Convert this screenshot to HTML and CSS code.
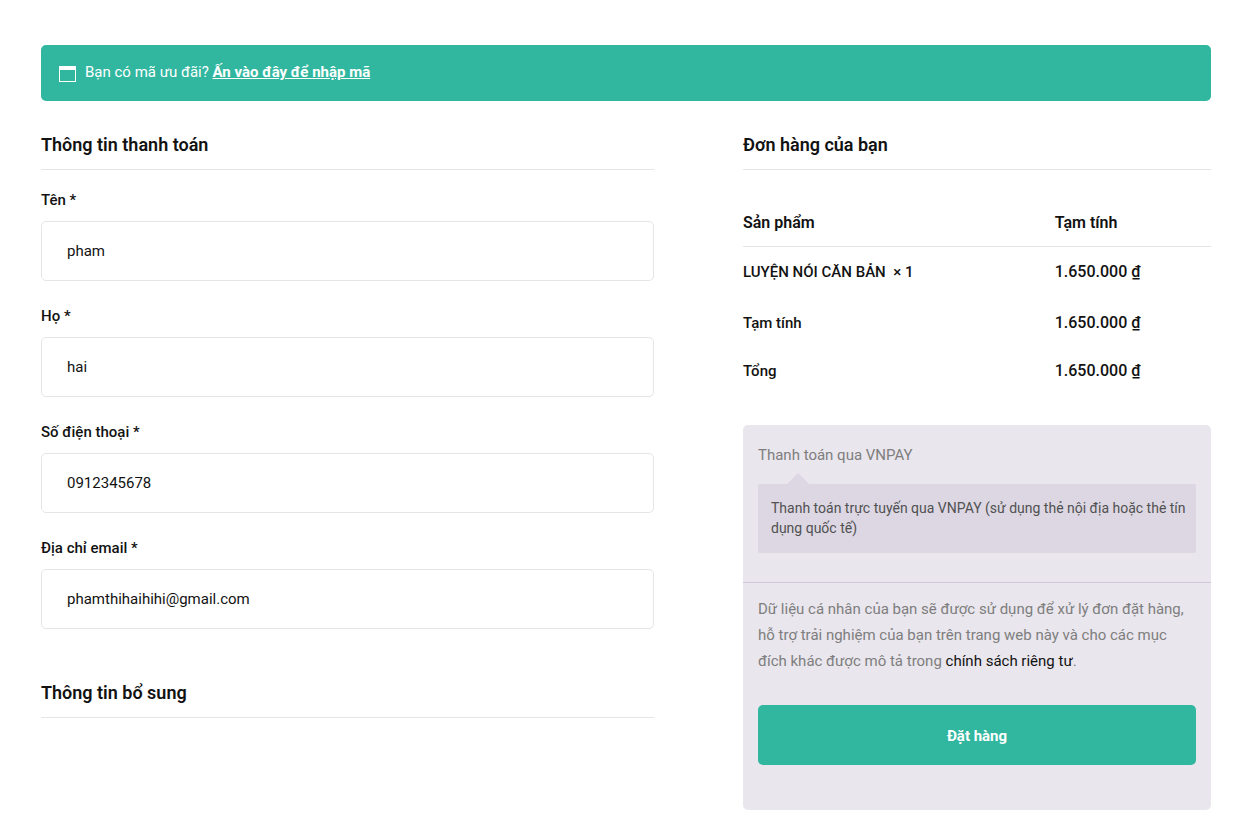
FILE: index.html
```html
<!DOCTYPE html>
<html lang="vi">
<head>
<meta charset="utf-8">
<meta name="viewport" content="width=device-width, initial-scale=1">
<title>Thanh toán</title>
<link rel="stylesheet" href="styles.css">
</head>
<body>
<main class="checkout">
  <div class="notice">
    <svg class="notice-icon" width="18" height="16" viewBox="0 0 18 16" aria-hidden="true"><path fill="currentColor" fill-rule="evenodd" d="M0 0h17v16H0zM1 4v11h15V4z"/></svg>
    <p class="notice-text">Bạn có mã ưu đãi? <a class="notice-link" href="#">Ấn vào đây để nhập mã</a></p>
  </div>
  <form class="columns">
    <div class="details">
      <section class="billing">
        <h2 class="heading">Thông tin thanh toán</h2>
        <div class="fields">
          <div class="field">
            <label class="label" for="first-name">Tên *</label>
            <input class="input" id="first-name" type="text" value="pham">
          </div>
          <div class="field">
            <label class="label" for="last-name">Họ *</label>
            <input class="input" id="last-name" type="text" value="hai">
          </div>
          <div class="field">
            <label class="label" for="phone">Số điện thoại *</label>
            <input class="input" id="phone" type="tel" value="0912345678">
          </div>
          <div class="field">
            <label class="label" for="email">Địa chỉ email *</label>
            <input class="input" id="email" type="email" value="phamthihaihihi@gmail.com">
          </div>
        </div>
      </section>
      <section>
        <h2 class="heading">Thông tin bổ sung</h2>
      </section>
    </div>
    <section class="order">
      <h2 class="heading">Đơn hàng của bạn</h2>
      <table class="order-table">
        <thead>
          <tr><th class="product" scope="col">Sản phẩm</th><th scope="col">Tạm tính</th></tr>
        </thead>
        <tbody>
          <tr class="item"><td>LUYỆN NÓI CĂN BẢN&nbsp; × 1</td><td class="price">1.650.000 ₫</td></tr>
        </tbody>
        <tfoot>
          <tr><th scope="row">Tạm tính</th><td class="price">1.650.000 ₫</td></tr>
          <tr><th scope="row">Tổng</th><td class="price">1.650.000 ₫</td></tr>
        </tfoot>
      </table>
      <div class="payment">
        <div class="method">
          <p class="method-name">Thanh toán qua VNPAY</p>
          <p class="method-info">Thanh toán trực tuyến qua VNPAY (sử dụng thẻ nội địa hoặc thẻ tín dụng quốc tế)</p>
        </div>
        <div class="place-order">
          <p class="privacy">Dữ liệu cá nhân của bạn sẽ được sử dụng để xử lý đơn đặt hàng, hỗ trợ trải nghiệm của bạn trên trang web này và cho các mục đích khác được mô tả trong <a class="privacy-link" href="#">chính sách riêng tư</a>.</p>
          <button class="submit" type="button">Đặt hàng</button>
        </div>
      </div>
    </section>
  </form>
</main>
</body>
</html>
```
FILE: styles.css
```css
*,
*::before {
  box-sizing: border-box;
}

body {
  margin: 0;
  background: #fff;
  color: #121212;
  font: 400 15px/26px Roboto, "Noto Sans", sans-serif;
}

p,
h2 {
  margin: 0;
}

.checkout {
  padding: 45px 33px 9px 41px;
}

.notice {
  display: flex;
  align-items: center;
  gap: 8px;
  margin-bottom: 30px;
  padding: 14px 18px 16px;
  border-radius: 5px;
  background: #31b79f;
  color: #fff;
}

.notice-icon {
  flex: none;
  margin-top: 4px;
}

.notice-link {
  color: inherit;
  font-weight: 700;
  text-decoration: underline;
}

.columns {
  display: grid;
  grid-template-columns: 613fr 468fr;
  gap: 89px;
  align-items: start;
}

.heading {
  padding-bottom: 10px;
  border-bottom: 1px solid #e5e5e5;
  font-size: 18px;
  font-weight: 600;
  line-height: 28px;
}

.billing {
  margin-bottom: 50px;
}

.fields {
  display: grid;
  gap: 22px;
  margin-top: 17px;
}

.field {
  display: grid;
  gap: 8px;
}

.label {
  font-weight: 500;
}

.input {
  width: 100%;
  height: 60px;
  padding: 0 25px;
  border: 1px solid #e5e5e5;
  border-radius: 5px;
  background: #fff;
  color: #121212;
  font: inherit;
}

.order-table {
  width: 100%;
  margin: 28px 0 31px;
  border-collapse: collapse;
  table-layout: fixed;
}

.order-table th,
.order-table td {
  height: 48px;
  padding: 2px 0 0;
  text-align: left;
  font-weight: 500;
}

.order-table thead th {
  border-bottom: 1px solid #e5e5e5;
  font-size: 16px;
  font-weight: 600;
}

.order-table .product {
  width: 66.6%;
}

.order-table .item td {
  height: 52px;
  padding: 0;
}

.order-table .price {
  font-size: 16px;
}

.payment {
  border-radius: 5px;
  background: #e9e6ed;
  color: #7e7e7e;
}

.method {
  padding: 17px 15px 29px;
  border-bottom: 1px solid #cfc8d8;
}

.method-info {
  position: relative;
  margin-top: 16px;
  padding: 14px 4px 15px 13px;
  border-radius: 2px;
  background: #dcd7e3;
  color: #515151;
  font-size: 14px;
  line-height: 20px;
}

.method-info::before {
  content: "";
  position: absolute;
  bottom: 100%;
  left: 29px;
  border: 11px solid transparent;
  border-top-width: 0;
  border-bottom-color: #dcd7e3;
}

.place-order {
  padding: 13px 15px 45px;
}

.privacy-link {
  color: #121212;
  text-decoration: none;
}

.submit {
  display: block;
  width: 100%;
  height: 60px;
  margin-top: 31px;
  padding: 2px 0 0;
  border: 0;
  border-radius: 5px;
  background: #31b79f;
  color: #fff;
  font: inherit;
  font-weight: 700;
}
```
